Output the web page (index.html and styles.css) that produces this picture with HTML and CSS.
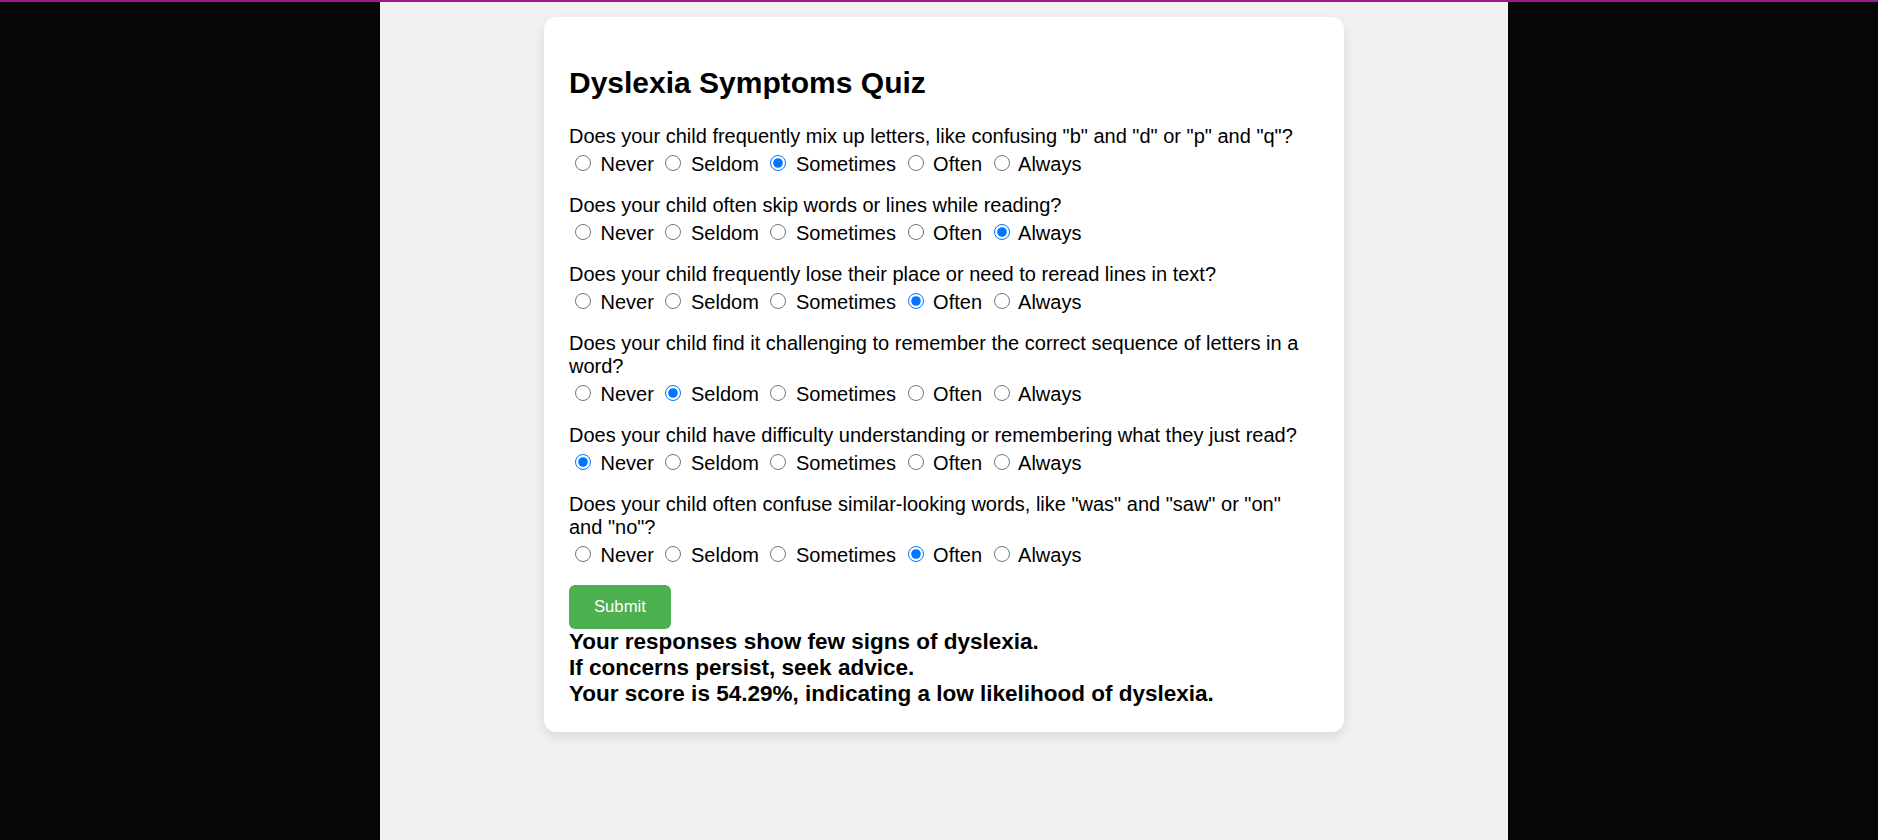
FILE: index.html
```html
<!DOCTYPE html>
<html lang="en">
<head>
<meta charset="utf-8">
<title>Dyslexia Symptoms Quiz</title>
<link rel="stylesheet" href="styles.css">
</head>
<body>
<div class="topbar"></div>
<div class="stage">
  <div class="side side-left"></div>
  <main class="viewport">
    <div class="card">
      <h2 class="title">Dyslexia Symptoms Quiz</h2>
      <form class="quiz">
        <div class="question">
          <div class="qtext">Does your child frequently mix up letters, like confusing "b" and "d" or "p" and "q"?</div>
          <div class="options">
            <label class="opt"><input type="radio" name="q1"> Never</label>
            <label class="opt"><input type="radio" name="q1"> Seldom</label>
            <label class="opt"><input type="radio" name="q1" checked> Sometimes</label>
            <label class="opt"><input type="radio" name="q1"> Often</label>
            <label class="opt"><input type="radio" name="q1"> Always</label>
          </div>
        </div>
        <div class="question">
          <div class="qtext">Does your child often skip words or lines while reading?</div>
          <div class="options">
            <label class="opt"><input type="radio" name="q2"> Never</label>
            <label class="opt"><input type="radio" name="q2"> Seldom</label>
            <label class="opt"><input type="radio" name="q2"> Sometimes</label>
            <label class="opt"><input type="radio" name="q2"> Often</label>
            <label class="opt"><input type="radio" name="q2" checked> Always</label>
          </div>
        </div>
        <div class="question">
          <div class="qtext">Does your child frequently lose their place or need to reread lines in text?</div>
          <div class="options">
            <label class="opt"><input type="radio" name="q3"> Never</label>
            <label class="opt"><input type="radio" name="q3"> Seldom</label>
            <label class="opt"><input type="radio" name="q3"> Sometimes</label>
            <label class="opt"><input type="radio" name="q3" checked> Often</label>
            <label class="opt"><input type="radio" name="q3"> Always</label>
          </div>
        </div>
        <div class="question">
          <div class="qtext">Does your child find it challenging to remember the correct sequence of letters in a word?</div>
          <div class="options">
            <label class="opt"><input type="radio" name="q4"> Never</label>
            <label class="opt"><input type="radio" name="q4" checked> Seldom</label>
            <label class="opt"><input type="radio" name="q4"> Sometimes</label>
            <label class="opt"><input type="radio" name="q4"> Often</label>
            <label class="opt"><input type="radio" name="q4"> Always</label>
          </div>
        </div>
        <div class="question">
          <div class="qtext">Does your child have difficulty understanding or remembering what they just read?</div>
          <div class="options">
            <label class="opt"><input type="radio" name="q5" checked> Never</label>
            <label class="opt"><input type="radio" name="q5"> Seldom</label>
            <label class="opt"><input type="radio" name="q5"> Sometimes</label>
            <label class="opt"><input type="radio" name="q5"> Often</label>
            <label class="opt"><input type="radio" name="q5"> Always</label>
          </div>
        </div>
        <div class="question">
          <div class="qtext">Does your child often confuse similar-looking words, like "was" and "saw" or "on" and "no"?</div>
          <div class="options">
            <label class="opt"><input type="radio" name="q6"> Never</label>
            <label class="opt"><input type="radio" name="q6"> Seldom</label>
            <label class="opt"><input type="radio" name="q6"> Sometimes</label>
            <label class="opt"><input type="radio" name="q6" checked> Often</label>
            <label class="opt"><input type="radio" name="q6"> Always</label>
          </div>
        </div>
        <button type="button" class="submit">Submit</button>
      </form>
      <div class="result">Your responses show few signs of dyslexia.<br>If concerns persist, seek advice.<br>Your score is 54.29%, indicating a low likelihood of dyslexia.</div>
    </div>
  </main>
  <div class="side side-right"></div>
</div>
</body>
</html>
```

FILE: styles.css
```css
html, body {
  margin: 0;
  padding: 0;
  height: 100%;
  overflow: hidden;
}

body {
  background: #060606;
  font-family: "Liberation Sans", Arial, sans-serif;
  color: #000;
  display: flex;
  flex-direction: column;
}

.topbar {
  height: 2px;
  background: #9c1a8e;
  flex: none;
}

.stage {
  flex: 1;
  display: flex;
}

.side-left {
  width: 380px;
  flex: none;
}

.viewport {
  width: 1128px;
  flex: none;
  background: #f1f1f1;
  display: flex;
  flex-direction: column;
  align-items: center;
}

.side-right {
  flex: 1;
}

.card {
  width: 750px;
  margin-top: 15px;
  padding: 25px;
  background: #fff;
  border-radius: 12px;
  box-shadow: 0 5px 12px rgba(0, 0, 0, 0.1);
}

.title {
  font-size: 30px;
  font-weight: bold;
  margin: 24px 0 25px;
}

.question {
  font-size: 20px;
  margin-bottom: 18px;
}

.qtext {
  line-height: 23px;
}

.options {
  margin-top: 3px;
  line-height: 23px;
}

.opt input {
  width: 16px;
  height: 16px;
  margin: 4px 4px 0 6px;
  vertical-align: baseline;
}

.submit {
  display: block;
  background: #4caf50;
  color: #fff;
  border: none;
  border-radius: 6px;
  padding: 12px 25px 13px;
  font-family: "Liberation Sans", Arial, sans-serif;
  font-size: 16.67px;
  line-height: 19px;
}

.result {
  font-size: 22.5px;
  font-weight: bold;
  line-height: 26px;
}
```
